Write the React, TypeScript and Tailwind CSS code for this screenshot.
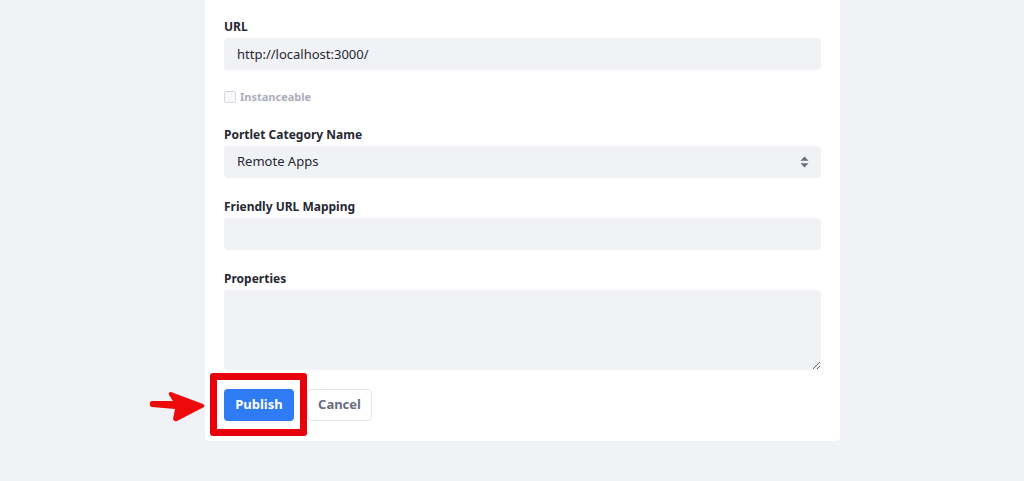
import React from "react";

function Label({ children }: { children: React.ReactNode }) {
  return <label className="block h-4 text-[12px] leading-4 font-bold text-[#272833] mb-[3px]">{children}</label>;
}

export default function App() {
  return (
    <div className="h-[481px] w-[1024px] overflow-hidden bg-[#f1f2f5] font-['Noto_Sans',sans-serif]">
      <div className="relative ml-[205px] w-[635px] bg-white rounded-b-[4px] px-[19px] pt-[19px] pb-[20px]">
        {/* URL */}
        <Label>URL</Label>
        <input
          readOnly
          value="http://localhost:3000/"
          className="block w-full h-8 rounded-[4px] bg-[#f1f2f5] px-[13px] text-[13px] text-[#272833] outline-none"
        />

        {/* Instanceable */}
        <div className="mt-[19px] flex h-4 items-center gap-[4px]">
          <span className="block h-[12px] w-[12px] rounded-[2px] border border-[#d6d7df] bg-[#f7f8f9]" />
          <span className="text-[11px] font-bold text-[#acadbb]">Instanceable</span>
        </div>

        {/* Portlet Category */}
        <div className="mt-[22px]">
          <Label>Portlet Category Name</Label>
          <div className="mt-[1px] flex h-8 items-center justify-between rounded-[4px] bg-[#f1f2f5] pl-[13px] pr-[12px]">
            <span className="text-[13px] text-[#272833]">Remote Apps</span>
            <svg width="9" height="12" viewBox="0 0 9 12" className="text-[#6b6c7e]">
              <path d="M4.5 0.5 L8.5 4.8 L0.5 4.8 Z" fill="currentColor" />
              <path d="M4.5 11.5 L8.5 7.2 L0.5 7.2 Z" fill="currentColor" />
            </svg>
          </div>
        </div>

        {/* Friendly URL */}
        <div className="mt-[21px]">
          <Label>Friendly URL Mapping</Label>
          <div className="h-8 rounded-[4px] bg-[#f1f2f5]" />
        </div>

        {/* Properties */}
        <div className="mt-[21px]">
          <Label>Properties</Label>
          <textarea
            readOnly
            className="block h-[80px] w-full resize-y rounded-[4px] bg-[#f1f2f5] outline-none"
          />
        </div>

        {/* Buttons */}
        <div className="mt-[19px] flex items-center gap-[13px]">
          <div className="relative">
            <button className="h-8 w-[70px] rounded-[4px] bg-[#2f7bf3] text-[13px] font-bold text-white">
              Publish
            </button>
            <div className="pointer-events-none absolute -left-[14px] -right-[13px] -top-[16px] -bottom-[15px] rounded-[3px] border-[7px] border-[#e8000a]" />
            <svg
              width="58"
              height="32"
              viewBox="0 0 58 32"
              className="absolute -left-[75px] top-[2px]"
            >
              <path
                d="M1 12 Q0 15 3 16 L26 18 L24 28 Q25 31 28 30 L55 16 Q56 14 54 13 L22 1 Q19 1 20 4 L24 10 L3 10 Q1 10 1 12 Z"
                fill="#ee0a0a"
              />
            </svg>
          </div>
          <button className="h-8 w-[65px] rounded-[4px] border border-[#e7e7ed] bg-white text-[13px] font-bold text-[#6b6c7e]">
            Cancel
          </button>
        </div>
      </div>
    </div>
  );
}
